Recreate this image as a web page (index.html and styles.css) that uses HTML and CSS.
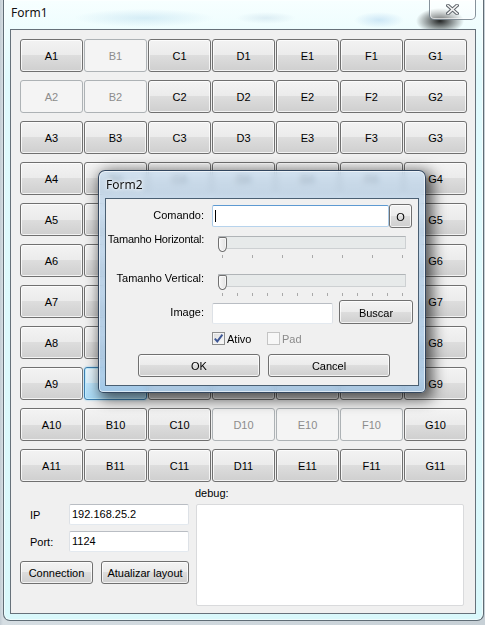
FILE: index.html
```html
<!DOCTYPE html>
<html>
<head>
<meta charset="utf-8">
<title>Form1</title>
<link rel="stylesheet" href="styles.css">
</head>
<body>
<div class="desk">
  <div class="win">
    <div class="titlebar">
      <span class="wtitle">Form1</span>
      <div class="closebtn">
        <svg class="xicon" width="13" height="11" viewBox="0 0 13 11">
          <path d="M2 1.5 L11 9.5 M11 1.5 L2 9.5" stroke="#5f656b" stroke-width="3.6" stroke-linecap="square" fill="none"/>
          <path d="M2 1.5 L11 9.5 M11 1.5 L2 9.5" stroke="#f6f6f6" stroke-width="1.6" stroke-linecap="square" fill="none"/>
        </svg>
      </div>
    </div>
    <div class="client">
      <div class="grid">
        <div class="btn">A1</div><div class="btn dis">B1</div><div class="btn">C1</div><div class="btn">D1</div><div class="btn">E1</div><div class="btn">F1</div><div class="btn">G1</div>
        <div class="btn dis">A2</div><div class="btn dis">B2</div><div class="btn">C2</div><div class="btn">D2</div><div class="btn">E2</div><div class="btn">F2</div><div class="btn">G2</div>
        <div class="btn">A3</div><div class="btn">B3</div><div class="btn">C3</div><div class="btn">D3</div><div class="btn">E3</div><div class="btn">F3</div><div class="btn">G3</div>
        <div class="btn">A4</div><div class="btn">B4</div><div class="btn">C4</div><div class="btn">D4</div><div class="btn">E4</div><div class="btn">F4</div><div class="btn">G4</div>
        <div class="btn">A5</div><div class="btn under">B5</div><div class="btn under">C5</div><div class="btn under">D5</div><div class="btn under">E5</div><div class="btn under">F5</div><div class="btn">G5</div>
        <div class="btn">A6</div><div class="btn under">B6</div><div class="btn under">C6</div><div class="btn under">D6</div><div class="btn under">E6</div><div class="btn under">F6</div><div class="btn">G6</div>
        <div class="btn">A7</div><div class="btn under">B7</div><div class="btn under">C7</div><div class="btn under">D7</div><div class="btn under">E7</div><div class="btn under">F7</div><div class="btn">G7</div>
        <div class="btn">A8</div><div class="btn under">B8</div><div class="btn under">C8</div><div class="btn under">D8</div><div class="btn under">E8</div><div class="btn under">F8</div><div class="btn">G8</div>
        <div class="btn">A9</div><div class="btn focus under">B9</div><div class="btn under">C9</div><div class="btn under">D9</div><div class="btn under">E9</div><div class="btn under">F9</div><div class="btn">G9</div>
        <div class="btn">A10</div><div class="btn">B10</div><div class="btn">C10</div><div class="btn dis">D10</div><div class="btn dis">E10</div><div class="btn dis">F10</div><div class="btn">G10</div>
        <div class="btn">A11</div><div class="btn">B11</div><div class="btn">C11</div><div class="btn">D11</div><div class="btn">E11</div><div class="btn">F11</div><div class="btn">G11</div>
      </div>
      <div class="bottom">
        <div class="leftcol">
          <div class="irow"><span class="ilabel">IP</span><div class="edit wide">192.168.25.2</div></div>
          <div class="irow"><span class="ilabel">Port:</span><div class="edit wide">1124</div></div>
          <div class="brow">
            <div class="btn conn">Connection</div>
            <div class="btn atual">Atualizar layout</div>
          </div>
        </div>
        <div class="rightcol">
          <div class="dlabel">debug:</div>
          <div class="memo"></div>
        </div>
      </div>
    </div>
  </div>

  <div class="dialog">
    <div class="dtitle">Form2</div>
    <div class="dclient">
      <div class="drow r1">
        <div class="dlab l1">Comando:</div>
        <div class="edit focused cmd"><span class="caret"></span></div>
        <div class="btn obtn">O</div>
      </div>
      <div class="drow r2">
        <div class="dlab l2"><span class="tight">Tamanho Horizontal:</span></div>
        <div class="slider">
          <div class="track"></div>
          <div class="thumb"></div>
          <div class="ticks t30"></div>
        </div>
      </div>
      <div class="drow r3">
        <div class="dlab l3">Tamanho Vertical:</div>
        <div class="slider">
          <div class="track"></div>
          <div class="thumb"></div>
          <div class="ticks t15"></div>
        </div>
      </div>
      <div class="drow r4">
        <div class="dlab l4">Image:</div>
        <div class="edit img"></div>
        <div class="btn buscar">Buscar</div>
      </div>
      <div class="drow r5">
        <div class="dlab"></div>
        <div class="chk ativo">
          <span class="cbox">
            <svg width="11" height="11" viewBox="0 0 11 11"><path d="M1.8 5.6 L4.3 8.4 L9.4 1.6" stroke="#3e5795" stroke-width="1.9" fill="none"/></svg>
          </span>
          <span class="ctext">Ativo</span>
        </div>
        <div class="chk off">
          <span class="cbox"></span>
          <span class="ctext">Pad</span>
        </div>
      </div>
      <div class="drow r6">
        <div class="btn dbtn">OK</div>
        <div class="btn dbtn">Cancel</div>
      </div>
    </div>
  </div>
</div>
</body>
</html>
```

FILE: styles.css
```css
* { box-sizing: border-box; }

html, body {
  margin: 0;
  padding: 0;
}

body {
  width: 485px;
  height: 625px;
  overflow: hidden;
  background: linear-gradient(to right, #c3cdd4 0, #d6dee3 3px, #c7d0d6 100%);
  font-family: "Liberation Sans", Arial, sans-serif;
  font-size: 11px;
  line-height: 13px;
  color: #000;
}

.desk {
  position: relative;
  width: 485px;
  height: 625px;
}

/* ---------- main window ---------- */
.win {
  margin-left: 3px;
  width: 481px;
  height: 621px;
  border: 1px solid #5f6c75;
  border-top: 0;
  border-radius: 0 0 7px 7px;
  padding: 0 7px 6px 6px;
  background: linear-gradient(to bottom, #f7ffff 0, #eefdfe 30px, #e0fafd 80px, #d9f8fb 100%);
  box-shadow: inset 0 0 0 1px rgba(255, 255, 255, 0.55);
  display: flex;
  flex-direction: column;
}

.titlebar {
  height: 29px;
  margin: 0 -7px 0 -6px;
  padding-left: 7px;
  padding-right: 7px;
  display: flex;
  justify-content: space-between;
  align-items: flex-start;
  background:
    radial-gradient(ellipse 24px 13px at 436px 21px, rgba(0, 0, 0, 0.85), rgba(0, 0, 0, 0) 100%),
    radial-gradient(ellipse 70px 9px at 140px 18px, rgba(160, 205, 230, 0.35), rgba(160, 205, 230, 0) 100%),
    radial-gradient(ellipse 25px 8px at 375px 20px, rgba(140, 190, 230, 0.35), rgba(140, 190, 230, 0) 100%),
    radial-gradient(ellipse 30px 6px at 262px 18px, rgba(170, 200, 220, 0.3), rgba(170, 200, 220, 0) 100%);
}

.wtitle {
  font-family: "Noto Sans", "Open Sans", sans-serif;
  font-size: 12px;
  line-height: 16px;
  padding-top: 5px;
  color: #111;
  text-shadow: 0 0 6px #ffffff, 0 0 3px #ffffff;
}

.closebtn {
  width: 47px;
  height: 20px;
  border: 1px solid rgba(95, 110, 122, 0.75);
  border-top: 0;
  border-radius: 0 0 5px 5px;
  background: linear-gradient(to bottom, rgba(255, 255, 255, 0.6), rgba(255, 255, 255, 0.3));
  box-shadow: inset 0 0 0 1px rgba(255, 255, 255, 0.6);
  display: flex;
  justify-content: center;
  align-items: flex-start;
  padding-top: 4px;
}

.xicon { display: block; }

.client {
  height: 585px;
  border: 1px solid #66717a;
  background: #f0f0f0;
  padding: 9px 0 0 9px;
  flex: none;
}

/* ---------- buttons ---------- */
.grid {
  display: grid;
  grid-template-columns: repeat(7, 63px);
  grid-auto-rows: 33px;
  column-gap: 1px;
  row-gap: 8px;
}

.btn {
  border: 1px solid #707070;
  border-radius: 3px;
  background: linear-gradient(to bottom, #f3f3f3 0, #ebebeb 50%, #dddddd 50%, #cfcfcf 100%);
  box-shadow: inset 0 0 0 1px rgba(255, 255, 255, 0.75);
  display: flex;
  align-items: center;
  justify-content: center;
  padding-top: 2px;
  color: #000;
  white-space: nowrap;
}

.btn.dis {
  border-color: #adb2b5;
  background: #f4f4f4;
  color: #8c8c8c;
  box-shadow: none;
}

.btn.focus {
  border-color: #3c7fb1;
  background: linear-gradient(to bottom, #eaf6fd 0, #d9f0fc 50%, #bee6fd 50%, #a7d9f5 100%);
  box-shadow: inset 0 0 0 1px #c2ecfc, 0 0 2px #7fc8ee;
}

/* labels hidden beneath the Form2 dialog */
.btn.under { color: transparent; }

/* ---------- bottom section ---------- */
.bottom {
  display: flex;
}

.leftcol {
  width: 169px;
  padding-top: 22px;
}

.irow {
  display: flex;
  align-items: center;
  height: 21px;
  margin-bottom: 6px;
}

.ilabel {
  width: 49px;
  padding-left: 10px;
  padding-top: 1px;
}

.edit {
  background: #ffffff;
  border: 1px solid;
  border-color: #b9bdc3 #dde1e6 #e3e9ef #dde1e6;
  border-radius: 2px;
  display: flex;
  align-items: center;
  padding: 0 2px;
}

.edit.wide {
  width: 120px;
  height: 21px;
}

.brow {
  display: flex;
  margin-top: 9px;
  height: 23px;
  gap: 8px;
}

.btn.conn { width: 73px; }
.btn.atual { width: 88px; }

.rightcol {
  margin-left: 7px;
  width: 268px;
}

.dlabel {
  height: 22px;
  padding-top: 5px;
  margin-left: -1px;
}

.memo {
  width: 268px;
  height: 102px;
  background: #ffffff;
  border: 1px solid #d9dadc;
  border-radius: 2px;
}

/* ---------- dialog ---------- */
.dialog {
  position: absolute;
  left: 98px;
  top: 170px;
  width: 328px;
  height: 223px;
  border: 1px solid rgba(35, 55, 80, 0.9);
  border-radius: 7px 7px 5px 5px;
  padding: 0 6px 6px 6px;
  background: linear-gradient(to bottom, rgba(196, 218, 238, 0.72) 0, rgba(178, 206, 232, 0.75) 40%, rgba(158, 194, 226, 0.8) 100%);
  -webkit-backdrop-filter: blur(3px);
  backdrop-filter: blur(3px);
  box-shadow: 4px 4px 14px 3px rgba(0, 0, 0, 0.62), inset 0 0 0 1px rgba(255, 255, 255, 0.6);
}

.dtitle {
  height: 27px;
  padding-left: 1px;
  padding-top: 6px;
  font-family: "Noto Sans", "Open Sans", sans-serif;
  font-size: 12px;
  line-height: 16px;
  color: #111;
  text-shadow: 0 0 6px #ffffff, 0 0 3px #ffffff;
}

.dclient {
  height: 188px;
  border: 1px solid #4a5f72;
  background: #f0f0f0;
  padding-top: 5px;
  overflow: hidden;
}

.drow {
  display: flex;
  align-items: flex-start;
}

.drow.r1 { height: 24px; }
.drow.r2 { height: 24px; margin-top: 8px; }
.drow.r3 { height: 24px; margin-top: 14px; }
.drow.r4 { height: 24px; margin-top: 2px; }
.drow.r5 { height: 14px; margin-top: 8px; }
.drow.r6 { height: 23px; margin-top: 8px; padding-left: 32px; gap: 8px; }

.dlab {
  width: 98px;
  margin-right: 8px;
  flex: none;
  display: flex;
  justify-content: flex-end;
  white-space: nowrap;
}

.tight { letter-spacing: -0.25px; }

.dlab.l1 { margin-top: 5px; }
.dlab.l2 { margin-top: -3px; }
.dlab.l3 { margin-top: -2px; }
.dlab.l4 { margin-top: 6px; }

.edit.cmd {
  width: 177px;
  height: 22px;
  margin-top: 1px;
}

.edit.focused {
  border-color: #5d9ad2 #a9c9e6 #b7d3ec #a9c9e6;
}

.caret {
  width: 1px;
  height: 12px;
  background: #000;
}

.btn.obtn {
  width: 23px;
  height: 24px;
}

.slider {
  position: relative;
  width: 200px;
  height: 24px;
}

.track {
  position: absolute;
  left: 6px;
  right: 6px;
  top: 0;
  height: 13px;
  background: #e7eaea;
  border: 1px solid #cdd0d2;
  border-top-color: #b0b4b7;
}

.thumb {
  position: absolute;
  left: 6px;
  top: 1px;
  width: 9px;
  height: 15px;
  border: 1px solid #707070;
  border-radius: 2px 2px 4px 4px / 2px 2px 6px 6px;
  background: linear-gradient(to right, #f7f7f7, #e2e2e2);
  box-shadow: inset 0 0 0 1px rgba(255, 255, 255, 0.7);
}

.ticks {
  position: absolute;
  left: 10px;
  top: 19px;
  width: 181px;
  height: 3px;
}

.ticks.t30 {
  background: repeating-linear-gradient(to right, #a9a9a9 0, #a9a9a9 1px, transparent 1px, transparent 30px);
}

.ticks.t15 {
  background: repeating-linear-gradient(to right, #a9a9a9 0, #a9a9a9 1px, transparent 1px, transparent 15px);
}

.edit.img {
  width: 121px;
  height: 21px;
  margin-top: 3px;
}

.btn.buscar {
  width: 74px;
  height: 24px;
  margin-left: 6px;
}

.chk {
  display: flex;
  align-items: center;
  height: 13px;
}

.chk.ativo { width: 55px; }

.cbox {
  width: 13px;
  height: 13px;
  border: 1px solid #8e8f8f;
  background: linear-gradient(to bottom right, #dcdcdc, #fbfbfb);
  box-shadow: inset 0 0 0 1px #f4f4f4;
  display: flex;
  align-items: center;
  justify-content: center;
  flex: none;
}

.cbox svg { display: block; }

.ctext {
  margin-left: 2px;
  padding-top: 1px;
}

.chk.off .cbox {
  border-color: #c4c4c4;
  background: #f7f7f7;
  box-shadow: none;
}

.chk.off .ctext { color: #8a8a8a; }

.btn.dbtn {
  width: 122px;
  height: 23px;
}
```
